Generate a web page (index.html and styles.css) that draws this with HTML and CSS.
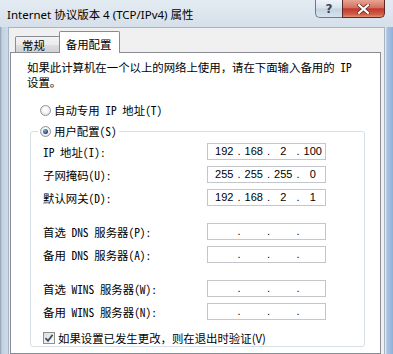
FILE: index.html
```html
<!DOCTYPE html>
<html lang="zh-CN">
<head>
<meta charset="utf-8">
<title>Internet 协议版本 4 (TCP/IPv4) 属性</title>
<link rel="stylesheet" href="styles.css">
</head>
<body>
<div class="window">
  <header class="titlebar">
    <span class="title">Internet 协议版本 4 (TCP/IPv4) 属性</span>
    <div class="caption">
      <span class="btn help">?</span>
      <span class="btn close"><svg width="13" height="10" viewBox="0 0 13 10"><path d="M2 1.2 L11 8.8 M11 1.2 L2 8.8" stroke="#5a1f18" stroke-width="3.6" stroke-linecap="square"/><path d="M2 1.2 L11 8.8 M11 1.2 L2 8.8" stroke="#fff" stroke-width="2.2" stroke-linecap="square"/></svg></span>
    </div>
  </header>
  <div class="body">
    <div class="client">
      <div class="tabs">
        <span class="tab">常规</span>
        <span class="tab active">备用配置</span>
      </div>
      <div class="panel">
        <p class="desc">如果此计算机在一个以上的网络上使用，请在下面输入备用的 IP<br>设置。</p>
        <div class="radio-row"><span class="radio"></span><span>自动专用 IP 地址(T)</span></div>
        <fieldset class="group">
          <legend class="legend"><span class="radio"><span class="dot"></span></span><span>用户配置(S)</span></legend>
          <div class="rows">
            <label>IP 地址(I):</label>
            <div class="ip"><span>192</span><i>.</i><span>168</span><i>.</i><span>2</span><i>.</i><span>100</span></div>
            <label>子网掩码(U):</label>
            <div class="ip"><span>255</span><i>.</i><span>255</span><i>.</i><span>255</span><i>.</i><span>0</span></div>
            <label>默认网关(D):</label>
            <div class="ip"><span>192</span><i>.</i><span>168</span><i>.</i><span>2</span><i>.</i><span>1</span></div>
          </div>
          <div class="rows">
            <label>首选 DNS 服务器(P):</label>
            <div class="ip"><span></span><i>.</i><span></span><i>.</i><span></span><i>.</i><span></span></div>
            <label>备用 DNS 服务器(A):</label>
            <div class="ip"><span></span><i>.</i><span></span><i>.</i><span></span><i>.</i><span></span></div>
          </div>
          <div class="rows">
            <label>首选 WINS 服务器(W):</label>
            <div class="ip"><span></span><i>.</i><span></span><i>.</i><span></span><i>.</i><span></span></div>
            <label>备用 WINS 服务器(N):</label>
            <div class="ip"><span></span><i>.</i><span></span><i>.</i><span></span><i>.</i><span></span></div>
          </div>
          <div class="check-row">
            <span class="check"><svg width="10" height="10" viewBox="0 0 10 10"><path d="M1.5 5.2 L4 7.8 L8.6 1.8" fill="none" stroke="#3f4d63" stroke-width="1.8"/></svg></span>
            <span>如果设置已发生更改，则在退出时验证(V)</span>
          </div>
        </fieldset>
      </div>
    </div>
  </div>
</div>
</body>
</html>
```
FILE: styles.css
```css
* { box-sizing: border-box; }

body {
  margin: 0;
  width: 393px;
  height: 354px;
  overflow: hidden;
}

.window {
  height: 354px;
  display: flex;
  flex-direction: column;
  background: linear-gradient(90deg, #8d9cac 0, #c3d2e1 2px, #cdd9e6 8px, #cdd9e6 385px, #eef3f9 385px, #a9c4e2 387px, #8fb1d8 393px);
}

.titlebar {
  height: 27px;
  flex: none;
  display: flex;
  justify-content: space-between;
  align-items: flex-start;
  padding: 0 8px 0 7px;
  background: linear-gradient(180deg, #e4ebf2, #d6e0ea);
}

.title {
  margin-top: 8px;
  font: 11.5px/14px "Noto Sans", "Noto Sans CJK SC", sans-serif;
  color: #000;
}

.caption { display: flex; }

.btn {
  height: 18px;
  display: flex;
  align-items: center;
  justify-content: center;
}

.help {
  width: 27px;
  border: 1px solid #6d7a89;
  border-top: none;
  border-right: none;
  border-radius: 0 0 0 5px;
  background: linear-gradient(#eef3f8, #d8e2ec 48%, #c4d2e1 52%, #d7e3ee);
  font: bold 12px/1 "DejaVu Sans", sans-serif;
  color: #3d4551;
}

.close {
  width: 43px;
  border: 1px solid #5b2a26;
  border-top: none;
  border-radius: 0 0 5px 0;
  background: linear-gradient(#e9a493, #d3705f 45%, #c2382a 52%, #cf5f4a 85%, #e49277);
}

.body {
  flex: 1;
  display: flex;
  padding: 0 8px;
  min-height: 0;
}

.client {
  flex: 1;
  display: flex;
  flex-direction: column;
  background: #f0f0f0;
  border: 1px solid #a8b4c0;
  border-bottom: none;
}

.tabs {
  display: flex;
  align-items: flex-end;
  padding: 3px 0 0 6px;
  position: relative;
  z-index: 1;
}

.tab {
  height: 16px;
  padding: 1px 15px 0 6px;
  border: 1px solid #898c95;
  border-bottom: none;
  border-radius: 2px 2px 0 0;
  background: linear-gradient(#f3f3f3, #ebebeb 50%, #dedede 51%, #d2d2d2);
  font: 11.4px/14px "Noto Sans CJK SC", sans-serif;
  color: #000;
}

.tab.active {
  height: 22px;
  padding: 5px 8px 2px 6px;
  margin-left: -2px;
  margin-bottom: -1px;
  background: #fff;
}

.panel {
  flex: 1;
  margin: 0 3px 0 1px;
  padding: 7px 15px 0 16px;
  background: #fff;
  border: 1px solid #898c95;
  font: 11.4px/14px "Noto Sans Mono CJK SC", "Noto Sans CJK SC", sans-serif;
  color: #000;
}

.desc {
  margin: 0;
  line-height: 15px;
}

.radio-row {
  display: flex;
  align-items: center;
  gap: 3px;
  height: 14px;
  margin-top: 13px;
  padding-left: 13px;
}

.radio {
  width: 11px;
  height: 11px;
  flex: none;
  display: flex;
  align-items: center;
  justify-content: center;
  border: 1px solid #8f949a;
  border-radius: 50%;
  background: radial-gradient(circle at 50% 40%, #fff 20%, #d8d8d8 100%);
}

.dot {
  width: 5px;
  height: 5px;
  border-radius: 50%;
  background: radial-gradient(circle at 40% 35%, #86b0e0, #1d3f70 70%);
}

.group {
  margin: 7px 0 0 3px;
  padding: 5px 0 1px 12px;
  border: 1px solid #d5dfe5;
  border-radius: 3px;
  min-width: 0;
}

.legend {
  display: flex;
  align-items: center;
  gap: 3px;
  height: 14px;
  padding: 0 2px;
  margin-left: -5px;
}

.rows {
  display: grid;
  grid-template-columns: 164px 119px;
  row-gap: 6px;
  align-items: center;
}

.rows + .rows { margin-top: 17px; }

.ip {
  height: 17px;
  display: grid;
  grid-template-columns: 1fr 5px 1fr 5px 1fr 5px 1fr;
  align-items: center;
  padding: 0 0 0 4px;
  border: 1px solid #c3c6cb;
  background: #fff;
  font: 11px/15px "Liberation Sans", Arial, sans-serif;
  color: #000;
}

.ip span, .ip i {
  text-align: center;
  font-style: normal;
}

.check-row {
  display: flex;
  align-items: center;
  gap: 3px;
  height: 14px;
  margin-top: 11px;
  font-family: "Noto Sans CJK SC", sans-serif;
}

.check {
  width: 12px;
  height: 12px;
  flex: none;
  display: flex;
  align-items: center;
  justify-content: center;
  border: 1px solid #8e8f8f;
  background: linear-gradient(135deg, #dcdcdc, #fdfdfd);
}
```
